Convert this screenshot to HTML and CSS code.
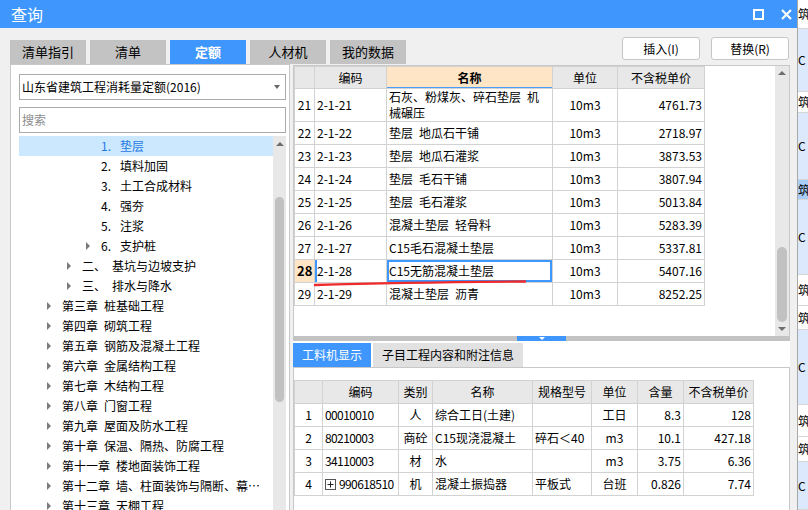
FILE: index.html
```html
<!DOCTYPE html>
<html lang="zh-CN">
<head>
<meta charset="utf-8">
<title>查询</title>
<link rel="stylesheet" href="styles.css">
</head>
<body>
<div class="page">
  <div class="dialog">
    <div class="titlebar">
      <span class="title">查询</span>
      <div class="wctl">
        <svg width="11" height="11" viewBox="0 0 11 11"><rect x="1" y="1" width="9" height="9" fill="none" stroke="#fff" stroke-width="2"/></svg>
        <svg width="11" height="11" viewBox="0 0 11 11"><path d="M1 1L10 10M10 1L1 10" stroke="#fff" stroke-width="2.2"/></svg>
      </div>
    </div>
    <div class="dbody">
      <div class="toprow">
        <div class="tabs">
          <div class="tab">清单指引</div>
          <div class="tab">清单</div>
          <div class="tab active">定额</div>
          <div class="tab">人材机</div>
          <div class="tab">我的数据</div>
        </div>
        <div class="btns">
          <button class="btn">插入(I)</button>
          <button class="btn">替换(R)</button>
        </div>
      </div>
      <div class="main">
        <div class="left">
          <div class="select"><span>山东省建筑工程消耗量定额(2016)</span><i class="caret"></i></div>
          <div class="search">搜索</div>
          <div class="tree">
            <div class="tree-list">
              <div class="tr l3 sel"><span class="arr none"></span><span class="no">1.</span><span>垫层</span></div>
              <div class="tr l3"><span class="arr none"></span><span class="no">2.</span><span>填料加固</span></div>
              <div class="tr l3"><span class="arr none"></span><span class="no">3.</span><span>土工合成材料</span></div>
              <div class="tr l3"><span class="arr none"></span><span class="no">4.</span><span>强夯</span></div>
              <div class="tr l3"><span class="arr none"></span><span class="no">5.</span><span>注浆</span></div>
              <div class="tr l3"><span class="arr"></span><span class="no">6.</span><span>支护桩</span></div>
              <div class="tr l2"><span class="arr"></span><span>二、&ensp;基坑与边坡支护</span></div>
              <div class="tr l2"><span class="arr"></span><span>三、&ensp;排水与降水</span></div>
              <div class="tr l1"><span class="arr"></span><span>第三章&ensp;桩基础工程</span></div>
              <div class="tr l1"><span class="arr"></span><span>第四章&ensp;砌筑工程</span></div>
              <div class="tr l1"><span class="arr"></span><span>第五章&ensp;钢筋及混凝土工程</span></div>
              <div class="tr l1"><span class="arr"></span><span>第六章&ensp;金属结构工程</span></div>
              <div class="tr l1"><span class="arr"></span><span>第七章&ensp;木结构工程</span></div>
              <div class="tr l1"><span class="arr"></span><span>第八章&ensp;门窗工程</span></div>
              <div class="tr l1"><span class="arr"></span><span>第九章&ensp;屋面及防水工程</span></div>
              <div class="tr l1"><span class="arr"></span><span>第十章&ensp;保温、隔热、防腐工程</span></div>
              <div class="tr l1"><span class="arr"></span><span>第十一章&ensp;楼地面装饰工程</span></div>
              <div class="tr l1"><span class="arr"></span><span>第十二章&ensp;墙、柱面装饰与隔断、幕…</span></div>
              <div class="tr l1"><span class="arr"></span><span>第十三章&ensp;天棚工程</span></div>
            </div>
            <div class="vscroll ls">
              <div class="sb-btn"><i class="up"></i></div>
              <div class="thumb lthumb"></div>
            </div>
          </div>
        </div>
        <div class="right">
          <div class="upper">
            <div class="grid-wrap">
              <table class="grid top">
                <colgroup><col class="w20"><col class="w72"><col class="w166"><col class="w65"><col class="w87"></colgroup>
                <tr class="hd"><th></th><th>编码</th><th class="selcol">名称</th><th>单位</th><th>不含税单价</th></tr>
                <tr class="tall"><td class="c">21</td><td>2-1-21</td><td class="wrap">石灰、粉煤灰、碎石垫层&ensp;机<br>械碾压</td><td class="c">10m3</td><td class="r">4761.73</td></tr>
                <tr><td class="c">22</td><td>2-1-22</td><td>垫层&ensp;地瓜石干铺</td><td class="c">10m3</td><td class="r">2718.97</td></tr>
                <tr><td class="c">23</td><td>2-1-23</td><td>垫层&ensp;地瓜石灌浆</td><td class="c">10m3</td><td class="r">3873.53</td></tr>
                <tr><td class="c">24</td><td>2-1-24</td><td>垫层&ensp;毛石干铺</td><td class="c">10m3</td><td class="r">3807.94</td></tr>
                <tr><td class="c">25</td><td>2-1-25</td><td>垫层&ensp;毛石灌浆</td><td class="c">10m3</td><td class="r">5013.84</td></tr>
                <tr><td class="c">26</td><td>2-1-26</td><td>混凝土垫层&ensp;轻骨料</td><td class="c">10m3</td><td class="r">5283.39</td></tr>
                <tr><td class="c">27</td><td>2-1-27</td><td>C15毛石混凝土垫层</td><td class="c">10m3</td><td class="r">5337.81</td></tr>
                <tr><td class="c cur">28</td><td class="curcode">2-1-28</td><td class="curcell">C15无筋混凝土垫层</td><td class="c">10m3</td><td class="r">5407.16</td></tr>
                <tr><td class="c">29</td><td>2-1-29</td><td>混凝土垫层&ensp;沥青</td><td class="c">10m3</td><td class="r">8252.25</td></tr>
              </table>
            </div>
            <div class="vscroll rs">
              <div class="sb-btn"><i class="up"></i></div>
              <div class="thumb rthumb"></div>
              <div class="sb-fill"></div>
              <div class="sb-btn"><i class="down"></i></div>
            </div>
          </div>
          <div class="splitter"><div class="handle"><i class="hdown"></i></div></div>
          <div class="lower">
            <div class="ltabs">
              <div class="ltab active">工料机显示</div>
              <div class="ltab">子目工程内容和附注信息</div>
            </div>
            <div class="lbox">
              <table class="grid bottom">
                <colgroup><col class="w28"><col class="w76"><col class="w34"><col class="w100"><col class="w59"><col class="w46"><col class="w46"><col class="w70"></colgroup>
                <tr class="hd"><th></th><th>编码</th><th>类别</th><th>名称</th><th>规格型号</th><th>单位</th><th>含量</th><th>不含税单价</th></tr>
                <tr><td class="c">1</td><td class="code">00010010</td><td class="c">人</td><td>综合工日(土建)</td><td></td><td class="c">工日</td><td class="r">8.3</td><td class="r">128</td></tr>
                <tr><td class="c">2</td><td class="code">80210003</td><td class="c">商砼</td><td>C15现浇混凝土</td><td>碎石＜40</td><td class="c">m3</td><td class="r">10.1</td><td class="r">427.18</td></tr>
                <tr><td class="c">3</td><td class="code">34110003</td><td class="c">材</td><td>水</td><td></td><td class="c">m3</td><td class="r">3.75</td><td class="r">6.36</td></tr>
                <tr><td class="c">4</td><td class="code"><svg class="plus" width="11" height="11" viewBox="0 0 11 11"><rect x="0.5" y="0.5" width="10" height="10" fill="#fff" stroke="#555"/><path d="M2.5 5.5H8.5M5.5 2.5V8.5" stroke="#222"/></svg>990618510</td><td class="c">机</td><td>混凝土振捣器</td><td>平板式</td><td class="c">台班</td><td class="r">0.826</td><td class="r">7.74</td></tr>
              </table>
            </div>
          </div>
        </div>
      </div>
    </div>
  </div>
  <div class="bgstrip">
    <div class="bs w h29">筑</div>
    <div class="bs b h63">C</div>
    <div class="bs w h21">筑</div>
    <div class="bs b h67">C</div>
    <div class="bs d h20">筑</div>
    <div class="bs b h75">C</div>
    <div class="bs w h31">筑</div>
    <div class="bs w h24">筑</div>
    <div class="bs b h75">C</div>
    <div class="bs w h32">筑</div>
    <div class="bs w h25">筑</div>
    <div class="bs b h48">C</div>
  </div>
  <svg class="redmark" width="216" height="10" viewBox="0 0 216 10"><path d="M2 7 Q 90 4.5 212 3.5" fill="none" stroke="#ee2a2a" stroke-width="2.4" stroke-linecap="round"/></svg>
</div>
</body>
</html>
```

FILE: styles.css
```css
* { box-sizing: border-box; margin: 0; padding: 0; }
html, body { width: 808px; height: 510px; overflow: hidden; }
body {
  font-family: "Noto Sans CJK SC", "Noto Sans", sans-serif;
  font-size: 12px;
  color: #000;
  background: #fff;
}
.page { position: relative; display: flex; width: 808px; height: 510px; overflow: hidden; }

.dialog { width: 797px; height: 510px; display: flex; flex-direction: column; background: #f0f0f0; flex: none; }
.titlebar {
  height: 28px; flex: none; background: #3f97fd; color: #fff;
  display: flex; align-items: center; justify-content: space-between;
  padding: 0 5px 0 11px;
}
.title { font-size: 16px; line-height: 20px; }
.wctl { display: flex; align-items: center; gap: 17px; }
.wctl svg { display: block; }

.dbody { flex: 1; min-height: 0; display: flex; flex-direction: column; padding: 0 7px 0 10px; }
.toprow { height: 36px; flex: none; display: flex; justify-content: space-between; }
.tabs { display: flex; gap: 4px; align-self: flex-end; }
.tab { width: 76px; height: 24px; background: #c3c3c3; font-size: 13px; line-height: 24px; text-align: center; }
.tab.active { background: #3f97fd; color: #fff; font-weight: bold; }
.btns { display: flex; gap: 11px; padding-top: 9px; padding-right: 1px; }
.btn {
  width: 78px; height: 23px; background: #fff; border: 1px solid #c6c6c6; border-radius: 3px;
  font-family: inherit; font-size: 12px; line-height: 21px; color: #000;
}

.main { flex: 1; min-height: 0; display: flex; gap: 3px; }
.left {
  width: 280px; flex: none; background: #fff; border: 1px solid #c8c8c8; border-bottom: none;
  padding: 9px 3px 0 8px; display: flex; flex-direction: column; overflow: hidden;
}
.select {
  height: 26px; flex: none; border: 1px solid #ababab; display: flex; align-items: center;
  justify-content: space-between; padding: 0 5px 0 2px; line-height: 24px;
}
.caret { display: block; border-top: 4px solid #666; border-left: 3.5px solid transparent; border-right: 3.5px solid transparent; }
.search { height: 26px; flex: none; margin-top: 7px; border: 1px solid #ababab; padding-left: 2px; line-height: 24px; color: #8c8c8c; }
.tree { margin-top: 3px; flex: 1; min-height: 0; display: flex; }
.tree-list { width: 254px; flex: none; }
.tr { height: 20px; display: flex; align-items: center; white-space: nowrap; line-height: 20px; overflow: hidden; }
.tr.sel { background: #cce8ff; color: #1f7ae4; }
.l1 { padding-left: 28px; }
.l2 { padding-left: 48px; }
.l3 { padding-left: 67px; }
.arr { width: 15px; flex: none; display: flex; align-items: center; }
.arr::before { content: ""; display: block; border-left: 4px solid #7a7a7a; border-top: 4px solid transparent; border-bottom: 4px solid transparent; }
.arr.none::before { display: none; }
.no { width: 19px; flex: none; }

.vscroll { flex: none; background: #e8e8e8; display: flex; flex-direction: column; align-items: center; }
.sb-btn { height: 14px; width: 100%; display: flex; align-items: center; justify-content: center; flex: none; }
.up { display: block; border-bottom: 4px solid #6e6e6e; border-left: 4px solid transparent; border-right: 4px solid transparent; }
.down { display: block; border-top: 4px solid #6e6e6e; border-left: 4px solid transparent; border-right: 4px solid transparent; }
.thumb { background: #c1c1c1; border-radius: 5px; flex: none; }
.ls { width: 13px; }
.ls .sb-btn { height: 16px; }
.lthumb { width: 9px; height: 205px; margin-top: 45px; }
.rs { width: 14px; }
.rthumb { width: 10px; height: 75px; margin-top: 167px; }
.sb-fill { flex: 1; }

.right { flex: 1; min-width: 0; display: flex; flex-direction: column; }
.upper { height: 271px; flex: none; margin-top: 1px; display: flex; background: #fff; border: 1px solid #c8c8c8; border-bottom: none; }
.grid-wrap { flex: 1; min-width: 0; }

.grid { border-collapse: collapse; table-layout: fixed; }
.grid.top { width: 411px; }
.grid.bottom { width: 459px; }
.w20 { width: 20px; } .w72 { width: 72px; } .w166 { width: 166px; } .w65 { width: 65px; } .w87 { width: 87px; }
.w28 { width: 28px; } .w76 { width: 76px; } .w34 { width: 34px; } .w100 { width: 100px; } .w59 { width: 59px; } .w46 { width: 46px; } .w70 { width: 70px; }
.grid th, .grid td {
  border: 1px solid #d2d2d2; padding: 0 2px; line-height: 16px; white-space: nowrap; overflow: hidden;
  font-weight: normal; text-align: left; vertical-align: middle;
}
.grid th { background: #e8e8e8; text-align: center; }
.grid .c { text-align: center; }
.grid .r { text-align: right; }
.top tr { height: 23px; }
.top tr.hd { height: 22px; }
.top tr.tall { height: 33px; }
.top .wrap { white-space: normal; line-height: 16px; }
.top th.selcol { background: #fee5c6; font-weight: bold; box-shadow: inset 0 -1px 0 #4a9cf5; }
.top td.cur { background: #fee5c6; font-weight: bold; font-size: 13px; }
.top td.curcode { box-shadow: inset 2px 0 0 #3f97fd; }
.top td.curcell { box-shadow: inset 0 0 0 2px #3f97fd; }

.splitter { height: 5px; flex: none; background: #c3c3c3; display: flex; justify-content: center; }
.handle { width: 49px; height: 5px; background: #3f97fd; display: flex; justify-content: center; align-items: flex-start; padding-top: 1px; }
.hdown { display: block; border-top: 3px solid #fff; border-left: 3px solid transparent; border-right: 3px solid transparent; }

.lower { flex: 1; min-height: 0; background: #fff; padding-top: 2px; display: flex; flex-direction: column; }
.ltabs { height: 24px; flex: none; display: flex; gap: 2px; }
.ltab { height: 24px; line-height: 24px; padding: 0 9px; background: #e1e1e1; font-size: 12px; }
.ltab.active { width: 78px; background: #3f97fd; color: #fff; text-align: center; padding: 0; }
.lbox { flex: 1; min-height: 0; border: 1px solid #c8c8c8; border-bottom: none; padding-top: 12px; }
.bottom tr { height: 23px; }
.bottom td.code { letter-spacing: -0.6px; }
.plus { vertical-align: -1px; margin-right: 3px; }

.bgstrip { width: 11px; flex: none; height: 510px; display: flex; flex-direction: column; border-left: 1px solid #a8a8a8; overflow: hidden; }
.bs { flex: none; display: flex; align-items: center; font-size: 12px; line-height: 14px; border-bottom: 1px solid #d6d6d6; white-space: nowrap; overflow: hidden; }
.bs.w { background: #fff; }
.bs.b { background: #dce8fb; }
.bs.d { background: #a8cdf8; }
.h20 { height: 20px; } .h21 { height: 21px; } .h24 { height: 24px; } .h25 { height: 25px; } .h29 { height: 29px; }
.h31 { height: 31px; } .h32 { height: 32px; } .h48 { height: 48px; } .h63 { height: 63px; } .h67 { height: 67px; } .h75 { height: 75px; }

.redmark { position: absolute; left: 313px; top: 278px; }
```
